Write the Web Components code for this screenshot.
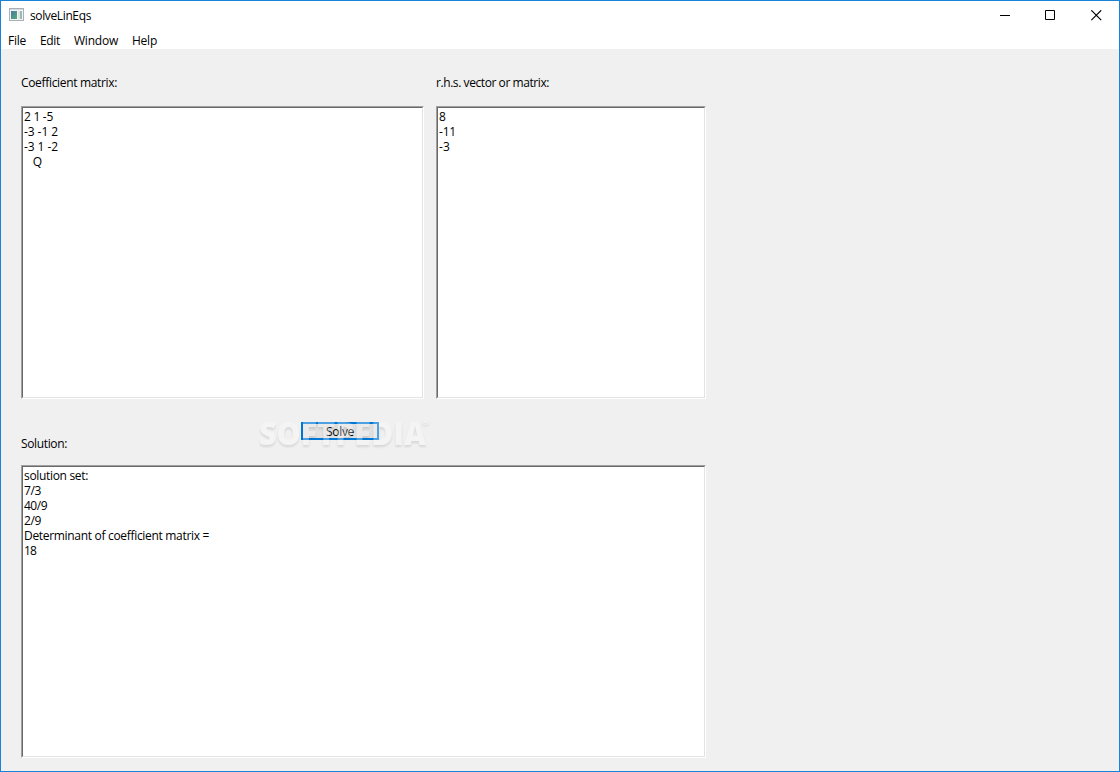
<!DOCTYPE html>
<html lang="en">
<head>
<meta charset="utf-8">
<title>solveLinEqs</title>
<style>
  html, body {
    margin: 0;
    height: 100%;
    overflow: hidden;
  }
  body {
    font: 12px/15px "Open Sans", "Noto Sans", sans-serif;
    color: #000;
  }
</style>
</head>
<body>
<app-window>
  <title-bar slot="title"><fit-text width="61">solveLinEqs</fit-text></title-bar>
  <menu-bar slot="menu">
    <fit-text width="18">File</fit-text>
    <fit-text width="20">Edit</fit-text>
    <fit-text width="44">Window</fit-text>
    <fit-text width="25">Help</fit-text>
  </menu-bar>
  <solver-form></solver-form>
</app-window>

<script>
  function attach(element, html) {
    const template = document.createElement("template");
    template.innerHTML = html;
    element.attachShadow({ mode: "open" }).appendChild(template.content.cloneNode(true));
  }

  // One line of text, tracked so that it takes the given width.
  class FitText extends HTMLElement {
    connectedCallback() {
      if (this.shadowRoot) {
        return;
      }
      attach(this, `
        <style>
          :host { display: block; height: 15px; }
          span { display: block; width: max-content; white-space: pre; }
        </style>
        <span><slot></slot></span>
      `);
      const width = Number(this.getAttribute("width"));
      if (!width) {
        return;
      }
      const span = this.shadowRoot.querySelector("span");
      const natural = span.getBoundingClientRect().width;
      span.style.letterSpacing = `${(width - natural) / this.textContent.length}px`;
      this.style.width = `${width}px`;
    }
  }

  class AppWindow extends HTMLElement {
    constructor() {
      super();
      attach(this, `
        <style>
          :host {
            display: flex;
            flex-direction: column;
            box-sizing: border-box;
            width: 1120px;
            height: 772px;
            border: 1px solid #1883d7;
            background: #f0f0f0;
          }
        </style>
        <slot name="title"></slot>
        <slot name="menu"></slot>
        <slot></slot>
      `);
    }
  }

  class TitleBar extends HTMLElement {
    constructor() {
      super();
      attach(this, `
        <style>
          :host {
            display: flex;
            align-items: center;
            height: 30px;
            padding-left: 8px;
            background: #fff;
          }
          svg { display: block; }
          .icon { margin: 0 5px 2px 0; }
          ::slotted(fit-text) { margin-bottom: 2px; }
          .controls { display: flex; margin: 0 16px 0 auto; gap: 30px; padding-bottom: 2px; }
        </style>
        <svg class="icon" width="16" height="14" viewBox="0 0 16 14">
          <defs>
            <linearGradient id="screen" x1="0" y1="0" x2="1" y2="1">
              <stop offset="0" stop-color="#4a78a8"/>
              <stop offset="1" stop-color="#4fae72"/>
            </linearGradient>
          </defs>
          <rect x=".5" y=".5" width="14" height="12" fill="#f4f4f4" stroke="#a8b0b8"/>
          <path d="M1 1.5h13" stroke="#d5dade"/>
          <rect x="2" y="3" width="6" height="8" fill="url(#screen)"/>
          <rect x="9" y="3" width="2" height="8" fill="#dfe3e6"/>
          <rect x="11" y="3" width="2" height="8" fill="#9fb8b0"/>
        </svg>
        <slot></slot>
        <div class="controls">
          <svg width="15" height="11" viewBox="0 0 15 11"><path d="M0 5.5h10" stroke="#000"/></svg>
          <svg width="16" height="11" viewBox="0 0 16 11"><path d="M.5.5h9v9h-9z" fill="none" stroke="#000"/></svg>
          <svg width="12" height="11" viewBox="0 0 12 11"><path d="M.3.3l9.9 9.9M10.2.3l-9.9 9.9" stroke="#000" stroke-width="1.2"/></svg>
        </div>
      `);
    }
  }

  class MenuBar extends HTMLElement {
    constructor() {
      super();
      attach(this, `
        <style>
          :host {
            display: flex;
            gap: 14px;
            box-sizing: border-box;
            height: 18px;
            padding: 2px 7px 0;
            background: #fff;
          }
        </style>
        <slot></slot>
      `);
    }
  }

  // Multi-line edit box with the classic sunken edge.
  class TextBox extends HTMLElement {
    constructor() {
      super();
      attach(this, `
        <style>
          :host {
            display: block;
            box-sizing: border-box;
            height: 293px;
            border: 1px solid;
            border-color: #a0a0a0 #fff #fff #a0a0a0;
          }
          div {
            box-sizing: border-box;
            height: 100%;
            padding: 1px;
            border: 1px solid;
            border-color: #696969 #e3e3e3 #e3e3e3 #696969;
            background: #fff;
          }
        </style>
        <div><slot></slot></div>
      `);
    }
  }

  class SolveButton extends HTMLElement {
    constructor() {
      super();
      attach(this, `
        <style>
          :host { display: block; position: relative; width: 78px; height: 18px; }
          button {
            display: flex;
            justify-content: center;
            align-items: center;
            box-sizing: border-box;
            width: 78px;
            height: 18px;
            padding: 1px 0 0;
            border: 2px solid #0078d7;
            background: #e1e1e1;
            font: inherit;
            color: #000;
          }
          .mark {
            position: absolute;
            left: -43px;
            top: -8px;
            pointer-events: none;
            overflow: visible;
          }
          text {
            font-family: "Open Sans", sans-serif;
            font-weight: 800;
            fill: #fff;
          }
          g {
            opacity: .3;
            filter: drop-shadow(0 2px 1px rgba(0, 0, 0, .35));
          }
        </style>
        <button type="button"><slot></slot></button>
        <svg class="mark" width="174" height="36">
          <g>
            <text x="1" y="31" font-size="32" textLength="167" lengthAdjust="spacingAndGlyphs">SOFTPEDIA</text>
            <text x="164" y="11" font-size="9">®</text>
          </g>
        </svg>
      `);
    }
  }

  class SolverForm extends HTMLElement {
    constructor() {
      super();
      attach(this, `
        <style>
          :host { display: block; padding: 26px 0 0 20px; }
          .inputs { display: grid; grid-template-columns: 403px 270px; gap: 16px 12px; }
          .run { display: grid; grid-template-columns: 280px 78px; margin-top: 23px; height: 43px; }
          .run > fit-text { margin-top: 14px; }
          .result { width: 685px; }
        </style>
        <div class="inputs">
          <fit-text width="96">Coefficient matrix:</fit-text>
          <fit-text width="113">r.h.s. vector or matrix:</fit-text>
          <text-box>
            <fit-text width="29">2 1 -5</fit-text>
            <fit-text width="34">-3 -1 2</fit-text>
            <fit-text width="34">-3 1 -2</fit-text>
            <fit-text width="18">   Q</fit-text>
          </text-box>
          <text-box>
            <fit-text width="7">8</fit-text>
            <fit-text width="17">-11</fit-text>
            <fit-text width="11">-3</fit-text>
          </text-box>
        </div>
        <div class="run">
          <fit-text width="46">Solution:</fit-text>
          <solve-button><fit-text width="28">Solve</fit-text></solve-button>
        </div>
        <text-box class="result">
          <fit-text width="64">solution set:</fit-text>
          <fit-text width="17">7/3</fit-text>
          <fit-text width="23">40/9</fit-text>
          <fit-text width="17">2/9</fit-text>
          <fit-text width="185">Determinant of coefficient matrix =</fit-text>
          <fit-text width="12">18</fit-text>
        </text-box>
      `);
    }
  }

  customElements.define("app-window", AppWindow);
  customElements.define("title-bar", TitleBar);
  customElements.define("menu-bar", MenuBar);
  customElements.define("text-box", TextBox);
  customElements.define("solve-button", SolveButton);
  customElements.define("solver-form", SolverForm);
  customElements.define("fit-text", FitText);
</script>
</body>
</html>
